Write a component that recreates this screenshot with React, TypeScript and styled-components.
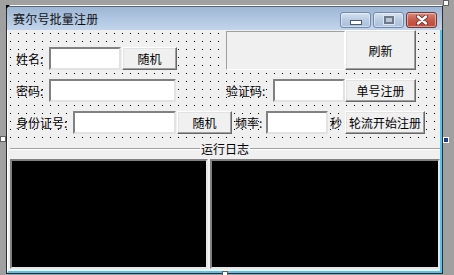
import React, { FC } from "react";
import styled, { createGlobalStyle } from "styled-components";

const GlobalStyle = createGlobalStyle`
  html, body {
    margin: 0;
    padding: 0;
    background: #a0a0a0;
  }
  body {
    font-family: "Noto Sans CJK SC", "Noto Sans", sans-serif;
    font-size: 12px;
    color: #000000;
  }
`;

export default function App() {
  return (
    <>
      <GlobalStyle />
      <Stage>
        <Window>
          <CornerMark />
          <TitleBar>
            <Title>赛尔号批量注册</Title>
            <CaptionButtons>
              <CaptionButton>
                <MinGlyph />
              </CaptionButton>
              <CaptionButton>
                <MaxGlyph />
              </CaptionButton>
              <CaptionButton close>
                <svg width="14" height="10" viewBox="0 0 14 10">
                  <path
                    d="M3 1.5 L11 8.5 M11 1.5 L3 8.5"
                    stroke="#5a2a24"
                    strokeWidth="4"
                    strokeLinecap="round"
                  />
                  <path
                    d="M3 1.5 L11 8.5 M11 1.5 L3 8.5"
                    stroke="#ffffff"
                    strokeWidth="2.4"
                    strokeLinecap="round"
                  />
                </svg>
              </CaptionButton>
            </CaptionButtons>
          </TitleBar>
          <Client>
            <FormGrid>
              <TopRow>
                <Label width={33}>姓名:</Label>
                <TextBox width={72} />
                <PushButton width={55} gap={1}>
                  随机
                </PushButton>
                <PicturePanel />
                <PushButton width={71} height={40}>
                  刷新
                </PushButton>
              </TopRow>
              <Row>
                <Label width={33}>密码:</Label>
                <TextBox width={127} />
                <Label width={47} gap={50}>
                  验证码:
                </Label>
                <TextBox width={72} />
                <PushButton width={71}>单号注册</PushButton>
              </Row>
              <Row>
                <Label width={57}>身份证号:</Label>
                <TextBox width={103} />
                <PushButton width={55} gap={1}>
                  随机
                </PushButton>
                <Label width={31} gap={3}>
                  频率:
                </Label>
                <TextBox width={62} />
                <Label width={17} gap={0}>
                  秒
                </Label>
                <PushButton width={80}>轮流开始注册</PushButton>
              </Row>
            </FormGrid>
            <GroupBox>
              <GroupHeader>
                <EtchedLine />
                <GroupTitle>运行日志</GroupTitle>
                <EtchedLine />
              </GroupHeader>
              <LogPanels>
                <LogBox />
                <LogBox />
              </LogPanels>
            </GroupBox>
          </Client>
        </Window>
        <Handle x={443} y={0} />
        <Handle x={0} y={136} />
        <Handle x={443} y={137} selected />
        <Handle x={222} y={271} />
      </Stage>
    </>
  );
}

const Stage = styled.div`
  position: relative;
  width: 454px;
  height: 275px;
  box-sizing: border-box;
  padding: 5px 0 0 6px;
  overflow: hidden;
`;

const Window = styled.div`
  position: relative;
  width: 437px;
  height: 269px;
  box-sizing: border-box;
  display: flex;
  flex-direction: column;
  border-top: 1px solid #ffffff;
  border-left: 1px solid #2e2e2e;
  border-right: 1px solid #2e2e2e;
  border-bottom: 1px solid #2e2e2e;
  background: #f0f0f0;
`;

const CornerMark = styled.div`
  position: absolute;
  left: -1px;
  top: -1px;
  width: 0;
  height: 0;
  border-top: 4px solid #000000;
  border-right: 4px solid transparent;
`;

const TitleBar = styled.div`
  height: 23px;
  flex: none;
  display: flex;
  align-items: center;
  justify-content: space-between;
  border-top: 1px solid #5a6678;
  padding: 0 5px 0 6px;
  background: linear-gradient(#9db6d5, #c2d5ec);
`;

const Title = styled.span`
  font-size: 12px;
  color: #111111;
  letter-spacing: 0.2px;
  margin-top: -1px;
`;

const CaptionButtons = styled.div`
  display: flex;
  gap: 2px;
  margin-top: 3px;
`;

const CaptionButton = styled.div<{ close?: boolean }>`
  width: 31px;
  height: 16px;
  box-sizing: border-box;
  display: flex;
  align-items: center;
  justify-content: center;
  border-radius: 3px;
  border: 1px solid ${(p) => (p.close ? "#6b3a33" : "#7489a8")};
  background: ${(p) =>
    p.close
      ? "linear-gradient(#d88a7c, #c9594a 50%, #c04a3b)"
      : "linear-gradient(#d6e1ee, #b8cbe2 50%, #aac0dc)"};
  box-shadow: inset 0 0 0 1px rgba(255, 255, 255, 0.45);
`;

const MinGlyph = styled.div`
  width: 10px;
  height: 3px;
  margin-top: 4px;
  border: 1px solid #4d5a6e;
  background: #ffffff;
`;

const MaxGlyph = styled.div`
  width: 6px;
  height: 4px;
  border: 2px solid #6d7888;
  outline: 1px solid #dfe6ef;
  background: #b8c7da;
`;

const Client = styled.div`
  flex: 1;
  display: flex;
  flex-direction: column;
  border-left: 1px solid #ffffff;
  border-right: 2px solid #4fc6f1;
  border-bottom: 2px solid #4fc6f1;
`;

const FormGrid = styled.div`
  height: 111px;
  flex: none;
  padding-left: 8px;
  background-color: #f0f0f0;
  background-image: linear-gradient(90deg, transparent 1px, #f0f0f0 1px),
    linear-gradient(#000000 1px, transparent 1px);
  background-size: 8px 8px;
  background-position: 2px 3px;
`;

const Row = styled.div`
  display: flex;
  align-items: center;
  height: 23px;
  margin-top: 9px;
`;

const TopRow = styled(Row)`
  height: 40px;
  margin-top: 0;
  align-items: flex-end;
`;

const Label = styled.div<{ width: number; gap?: number }>`
  width: ${(p) => p.width}px;
  margin-left: ${(p) => p.gap ?? 0}px;
  height: 23px;
  line-height: 23px;
  font-size: 12px;
  white-space: nowrap;
  padding-left: ${(p) => (p.gap === 0 ? 2 : 0)}px;
  box-sizing: border-box;
`;

const TextBox = styled.div<{ width: number }>`
  width: ${(p) => p.width}px;
  height: 23px;
  box-sizing: border-box;
  background: #ffffff;
  border: 2px solid;
  border-color: #828282 #e3e3e3 #e3e3e3 #828282;
`;

const PushButton = styled.div<{ width: number; height?: number; gap?: number }>`
  width: ${(p) => p.width}px;
  height: ${(p) => p.height ?? 23}px;
  margin-left: ${(p) => p.gap ?? 0}px;
  box-sizing: border-box;
  display: flex;
  align-items: center;
  justify-content: center;
  font-size: 12px;
  white-space: nowrap;
  background: #f0f0f0;
  border: 1px solid;
  border-color: #ffffff #696969 #696969 #ffffff;
  box-shadow: inset -1px -1px 0 #a0a0a0, inset 1px 1px 0 #e3e3e3;
`;

const PicturePanel = styled.div`
  width: 119px;
  height: 39px;
  margin-left: 49px;
  box-sizing: border-box;
  background: #f0f0f0;
  border: 1px solid;
  border-color: #a0a0a0 #ffffff #ffffff #a0a0a0;
`;

const GroupBox = styled.div`
  flex: 1;
  display: flex;
  flex-direction: column;
  padding: 1px 0 0 2px;
`;

const GroupHeader = styled.div`
  display: flex;
  align-items: center;
  height: 14px;
`;

const EtchedLine = styled.div`
  flex: 1;
  height: 1px;
  background: #a0a0a0;
  border-bottom: 1px solid #ffffff;
`;

const GroupTitle = styled.span`
  font-size: 12px;
  line-height: 14px;
  padding: 0 1px;
`;

const LogPanels = styled.div`
  flex: 1;
  display: flex;
  gap: 2px;
  margin-top: 3px;
  padding-bottom: 2px;
`;

const LogBox = styled.div`
  flex: 1;
  background: #000000;
  box-sizing: border-box;
  border: 2px solid;
  border-color: #808080 #e6e6e6 #e6e6e6 #808080;
  &:first-child {
    flex: 0 0 198px;
  }
`;

const Handle = styled.div<{ x: number; y: number; selected?: boolean }>`
  position: absolute;
  left: ${(p) => p.x}px;
  top: ${(p) => p.y}px;
  width: 6px;
  height: 6px;
  box-sizing: border-box;
  border: 1px solid ${(p) => (p.selected ? "#ffffff" : "#606060")};
  background: ${(p) => (p.selected ? "#1e3a8a" : "#ffffff")};
`;
